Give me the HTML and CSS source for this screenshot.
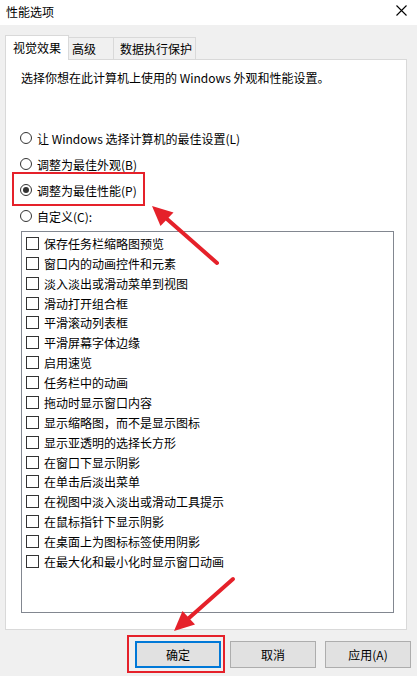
FILE: index.html
```html
<!DOCTYPE html>
<html lang="zh-CN">

<head>
    <meta charset="UTF-8">
    <meta name="viewport" content="width=device-width, initial-scale=1.0">
    <title>性能选项</title>
    <link rel="stylesheet" href="styles.css">
</head>

<body>
    <div class="titlebar">
        <span class="title">性能选项</span>
        <span class="close">
            <svg width="11" height="11" viewBox="0 0 11 11">
                <path d="M0.5 0.5 L10.5 10.5 M10.5 0.5 L0.5 10.5" stroke="#000" stroke-width="1.1" fill="none" />
            </svg>
        </span>
    </div>

    <div class="tabs">
        <div class="tab active">视觉效果</div>
        <div class="tab tab-adv">高级</div>
        <div class="tab tab-dep">数据执行保护</div>
    </div>

    <div class="panel">
        <p class="desc">选择你想在此计算机上使用的 Windows 外观和性能设置。</p>

        <div class="options">
            <div class="radio-row"><span class="radio"></span>让 Windows 选择计算机的最佳设置(L)</div>
            <div class="radio-row"><span class="radio"></span>调整为最佳外观(B)</div>
            <div class="radio-row"><span class="radio checked"></span>调整为最佳性能(P)<span class="mark mark-radio"></span></div>
            <div class="radio-row"><span class="radio"></span>自定义(C):</div>
        </div>

        <ul class="checklist">
            <li><span class="box"></span>保存任务栏缩略图预览</li>
            <li><span class="box"></span>窗口内的动画控件和元素</li>
            <li><span class="box"></span>淡入淡出或滑动菜单到视图</li>
            <li><span class="box"></span>滑动打开组合框</li>
            <li><span class="box"></span>平滑滚动列表框</li>
            <li><span class="box"></span>平滑屏幕字体边缘</li>
            <li><span class="box"></span>启用速览</li>
            <li><span class="box"></span>任务栏中的动画</li>
            <li><span class="box"></span>拖动时显示窗口内容</li>
            <li><span class="box"></span>显示缩略图，而不是显示图标</li>
            <li><span class="box"></span>显示亚透明的选择长方形</li>
            <li><span class="box"></span>在窗口下显示阴影</li>
            <li><span class="box"></span>在单击后淡出菜单</li>
            <li><span class="box"></span>在视图中淡入淡出或滑动工具提示</li>
            <li><span class="box"></span>在鼠标指针下显示阴影</li>
            <li><span class="box"></span>在桌面上为图标标签使用阴影</li>
            <li><span class="box"></span>在最大化和最小化时显示窗口动画</li>
        </ul>
    </div>

    <div class="buttons">
        <button class="btn default">确定<span class="mark mark-btn"></span></button>
        <button class="btn">取消</button>
        <button class="btn">应用(A)</button>
    </div>

    <svg class="arrows" width="417" height="676" viewBox="0 0 417 676">
        <line x1="217" y1="263" x2="167" y2="219" stroke="#e5212a" stroke-width="4" stroke-linecap="round" />
        <polygon points="152,206 173.5,212.5 160.5,226" fill="#e5212a" />
        <line x1="233" y1="579" x2="189" y2="618" stroke="#e5212a" stroke-width="4" stroke-linecap="round" />
        <polygon points="174,631 195,624.5 182.5,611" fill="#e5212a" />
    </svg>
</body>

</html>
```

FILE: styles.css
```css
* {
    box-sizing: border-box;
}

body {
    margin: 0;
    width: 417px;
    height: 676px;
    position: relative;
    overflow: hidden;
    background-color: #f0f0f0;
    font-family: "Noto Sans CJK SC", sans-serif;
    font-size: 12px;
    color: #000;
}

.titlebar {
    height: 25px;
    background-color: #fff;
    display: flex;
    align-items: center;
    padding: 0 0 2px 6px;
}

.title {
    flex: 1;
}

.close {
    width: 11px;
    height: 11px;
    margin: 0 10px 2px 0;
    display: block;
}

.close svg {
    display: block;
}

.tabs {
    margin-top: 10px;
    padding-left: 5px;
    height: 25px;
    display: flex;
    align-items: flex-end;
    position: relative;
    z-index: 1;
}

.tab {
    height: 22px;
    margin-bottom: 1px;
    border: 1px solid #d9d9d9;
    border-bottom: none;
    background-color: #f0f0f0;
    display: flex;
    align-items: center;
}

.tab.active {
    width: 64px;
    height: 25px;
    margin-bottom: 0;
    background-color: #fff;
    justify-content: center;
    padding-bottom: 2px;
}

.tab-adv {
    width: 45px;
    padding-left: 3px;
    border-left: none;
}

.tab-dep {
    width: 82px;
    padding-left: 6px;
    border-left: none;
}

.panel {
    margin: -1px 10px 0 5px;
    height: 571px;
    border: 1px solid #d9d9d9;
    background-color: #fff;
    padding: 10px 12px 0 15px;
}

.desc {
    margin: 0;
    line-height: 16px;
}

.options {
    margin: 39px 0 0 -15px;
}

.radio-row {
    height: 26px;
    display: flex;
    align-items: center;
    gap: 5px;
    padding-left: 14px;
    position: relative;
}

.radio {
    width: 12px;
    height: 12px;
    border: 1px solid #333;
    border-radius: 50%;
    display: flex;
    align-items: center;
    justify-content: center;
}

.radio.checked::after {
    content: "";
    width: 6px;
    height: 6px;
    border-radius: 50%;
    background-color: #333;
}

.mark {
    position: absolute;
    border: 2px solid #e5212a;
}

.mark-radio {
    left: 6px;
    top: -5px;
    width: 133px;
    height: 34px;
}

.checklist {
    list-style: none;
    margin: 2px 0 0;
    padding: 1.5px 0 0 4px;
    height: 382px;
    border: 1px solid #828790;
}

.checklist li {
    height: 19.875px;
    display: flex;
    align-items: center;
    gap: 5px;
}

.box {
    width: 13px;
    height: 13px;
    border: 1px solid #333;
}

.buttons {
    margin-top: 11px;
    display: flex;
    justify-content: flex-end;
    gap: 9px;
    padding-right: 6px;
}

.btn {
    width: 86px;
    height: 27px;
    border: 1px solid #adadad;
    background-color: #e1e1e1;
    font-family: inherit;
    font-size: 12px;
    color: #000;
    padding: 0;
    position: relative;
}

.btn.default {
    border: 2px solid #0078d7;
}

.mark-btn {
    left: -10px;
    top: -8px;
    width: 98px;
    height: 38px;
}

.arrows {
    position: absolute;
    left: 0;
    top: 0;
    pointer-events: none;
}
```
